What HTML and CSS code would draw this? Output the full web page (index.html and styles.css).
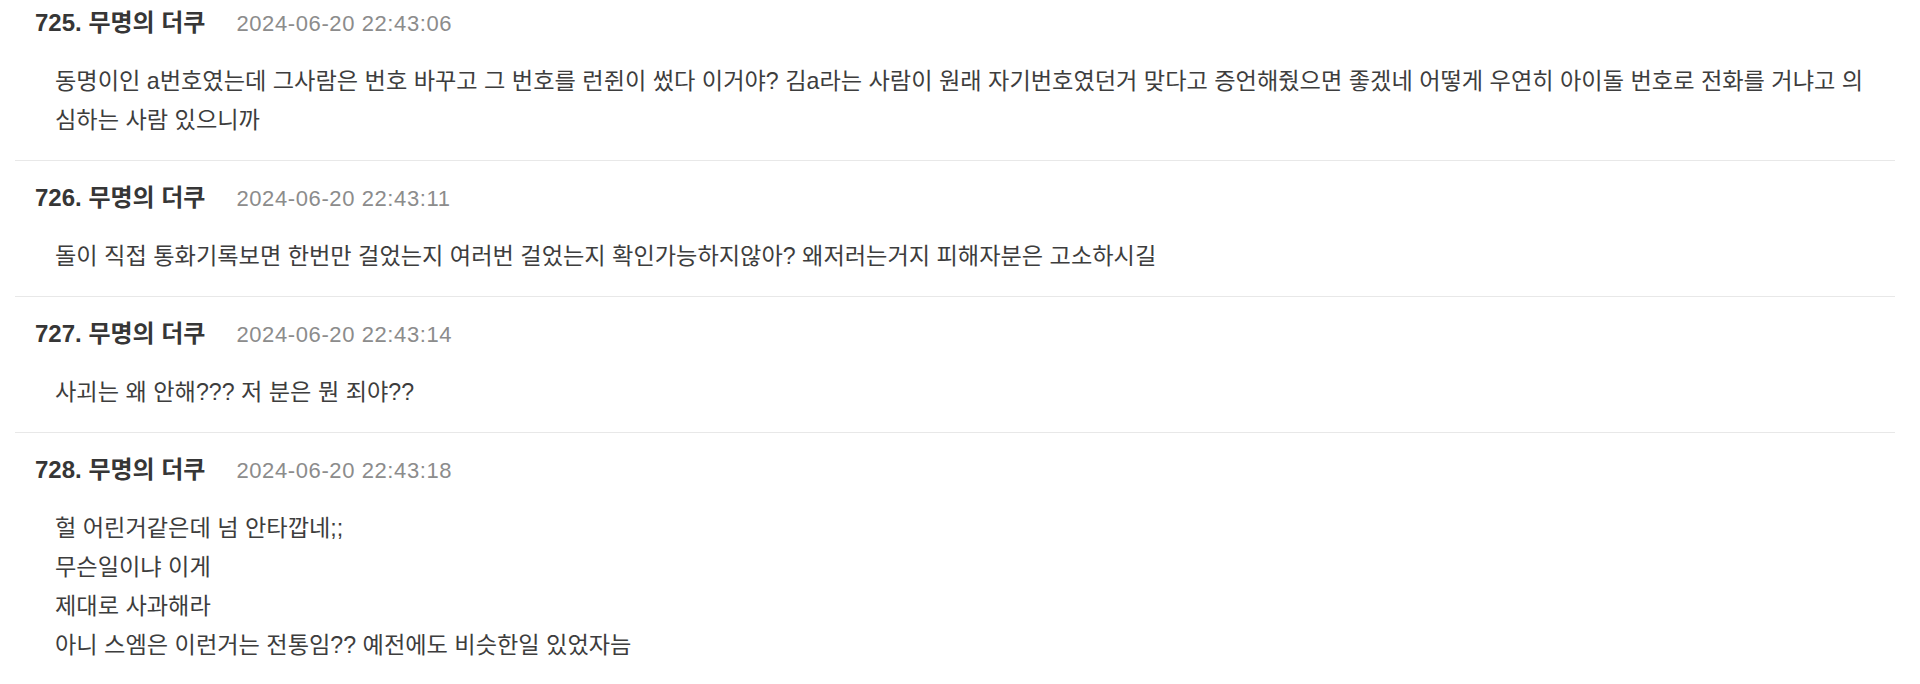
FILE: index.html
```html
<!DOCTYPE html>
<html lang="ko">
<head>
<meta charset="utf-8">
<title>댓글</title>
<link rel="stylesheet" href="styles.css">
</head>
<body>
<main class="comments">
  <article class="comment">
    <header class="comment-head">
      <span class="comment-title">725. 무명의 더쿠</span>
      <span class="comment-date">2024-06-20 22:43:06</span>
    </header>
    <div class="comment-body">동명이인 a번호였는데 그사람은 번호 바꾸고 그 번호를 런쥔이 썼다 이거야? 김a라는 사람이 원래 자기번호였던거 맞다고 증언해줬으면 좋겠네 어떻게 우연히 아이돌 번호로 전화를 거냐고 의심하는 사람 있으니까</div>
  </article>
  <article class="comment">
    <header class="comment-head">
      <span class="comment-title">726. 무명의 더쿠</span>
      <span class="comment-date">2024-06-20 22:43:11</span>
    </header>
    <div class="comment-body">돌이 직접 통화기록보면 한번만 걸었는지 여러번 걸었는지 확인가능하지않아? 왜저러는거지 피해자분은 고소하시길</div>
  </article>
  <article class="comment">
    <header class="comment-head">
      <span class="comment-title">727. 무명의 더쿠</span>
      <span class="comment-date">2024-06-20 22:43:14</span>
    </header>
    <div class="comment-body">사괴는 왜 안해??? 저 분은 뭔 죄야??</div>
  </article>
  <article class="comment">
    <header class="comment-head">
      <span class="comment-title">728. 무명의 더쿠</span>
      <span class="comment-date">2024-06-20 22:43:18</span>
    </header>
    <div class="comment-body">헐 어린거같은데 넘 안타깝네;;<br>무슨일이냐 이게<br>제대로 사과해라<br>아니 스엠은 이런거는 전통임?? 예전에도 비슷한일 있었자늠</div>
  </article>
</main>
</body>
</html>
```

FILE: styles.css
```css
html, body {
  margin: 0;
  padding: 0;
  background: #ffffff;
}

body {
  font-family: "Liberation Sans", "Noto Sans CJK KR", sans-serif;
  color: #3a3a3a;
  overflow: hidden;
}

.comments {
  padding: 0 25px 0 15px;
}

.comment {
  padding: 20px 15px 20px 0;
  border-bottom: 1px solid #e8e8e8;
}

.comment:first-child {
  padding-top: 6px;
}

.comment-head {
  display: flex;
  align-items: baseline;
  gap: 31px;
  padding-left: 20px;
  height: 34px;
  line-height: 34px;
}

.comment-title {
  font-size: 24px;
  font-weight: 700;
  color: #363636;
}

.comment-date {
  font-size: 22px;
  letter-spacing: 0.6px;
  color: #8c8c8c;
}

.comment-body {
  margin-top: 22px;
  padding-left: 40px;
  font-size: 23.2px;
  line-height: 39px;
  color: #3d3d3d;
}
```
